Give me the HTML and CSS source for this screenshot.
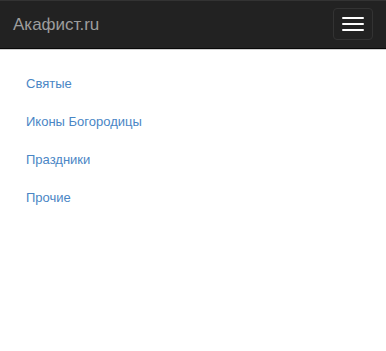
FILE: index.html
```html
<!DOCTYPE html>
<html lang="ru">
<head>
<meta charset="utf-8">
<title>Акафист.ru</title>
<link rel="stylesheet" href="styles.css">
</head>
<body>
<header class="navbar">
  <a class="brand" href="#">Акафист.ru</a>
  <button class="toggle" type="button" aria-label="Меню">
    <span class="bar"></span>
    <span class="bar"></span>
    <span class="bar"></span>
  </button>
</header>
<nav class="menu">
  <ul class="menu-list">
    <li><a href="#">Святые</a></li>
    <li><a href="#">Иконы Богородицы</a></li>
    <li><a href="#">Праздники</a></li>
    <li><a href="#">Прочие</a></li>
  </ul>
</nav>
</body>
</html>
```

FILE: styles.css
```css
html, body {
  margin: 0;
  padding: 0;
  background: #fff;
  font-family: "Liberation Sans", Arial, sans-serif;
}

.navbar {
  display: flex;
  align-items: center;
  justify-content: space-between;
  height: 47px;
  background: #222;
  border-top: 1px solid #333;
  border-bottom: 1px solid #080808;
  box-shadow: 0 1px 0 #d0d0d0;
  padding: 0 13px;
}

.brand {
  color: #9d9d9d;
  font-size: 17px;
  line-height: 20px;
  text-decoration: none;
}

.toggle {
  display: flex;
  flex-direction: column;
  align-items: center;
  justify-content: center;
  gap: 4px;
  width: 40px;
  height: 32px;
  padding: 0;
  background: transparent;
  border: 1px solid #333;
  border-radius: 4px;
  margin-top: -1px;
}

.bar {
  display: block;
  width: 22px;
  height: 2px;
  border-radius: 1px;
  background: #fff;
}

.menu {
  padding-top: 16px;
}

.menu-list {
  list-style: none;
  margin: 0;
  padding: 0;
}

.menu-list a {
  display: block;
  padding: 9px 26px;
  line-height: 20px;
  font-size: 13px;
  color: #4a86c5;
  text-decoration: none;
}
```
